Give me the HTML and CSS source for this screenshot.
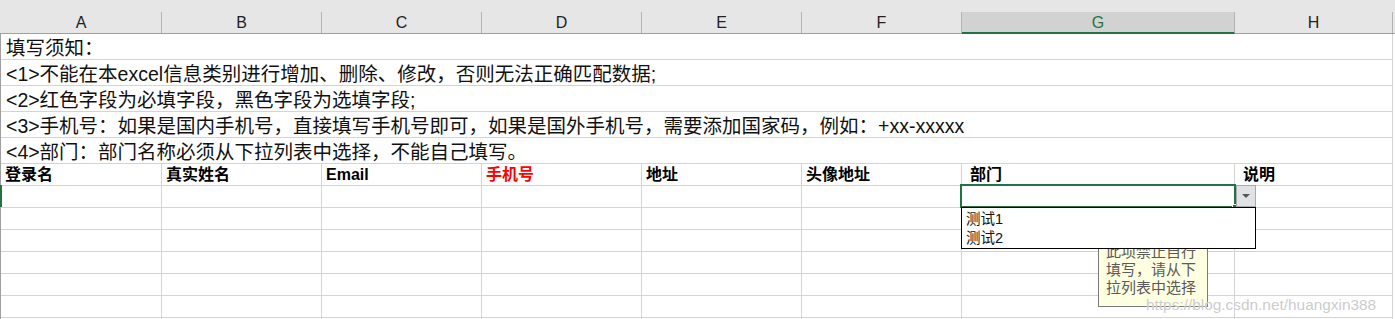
FILE: index.html
```html
<!DOCTYPE html>
<html lang="zh-CN">
<head>
    <meta charset="UTF-8">
    <meta name="viewport" content="width=device-width, initial-scale=1.0">
    <title>用户导入模板</title>
    <link rel="stylesheet" href="styles.css">
</head>
<body>
    <div class="sheet">
        <div class="col-heads">
            <div class="col-head">A</div>
            <div class="col-head">B</div>
            <div class="col-head">C</div>
            <div class="col-head">D</div>
            <div class="col-head">E</div>
            <div class="col-head">F</div>
            <div class="col-head active">G</div>
            <div class="col-head">H</div>
        </div>

        <div class="notes">
            <div class="note">填写须知：</div>
            <div class="note">&lt;1&gt;不能在本excel信息类别进行增加、删除、修改，否则无法正确匹配数据;</div>
            <div class="note">&lt;2&gt;红色字段为必填字段，黑色字段为选填字段;</div>
            <div class="note">&lt;3&gt;手机号：如果是国内手机号，直接填写手机号即可，如果是国外手机号，需要添加国家码，例如：+xx-xxxxx</div>
            <div class="note">&lt;4&gt;部门：部门名称必须从下拉列表中选择，不能自己填写。</div>
        </div>

        <div class="rows">
            <div class="row head-row">
                <div class="cell">登录名</div>
                <div class="cell">真实姓名</div>
                <div class="cell">Email</div>
                <div class="cell required">手机号</div>
                <div class="cell">地址</div>
                <div class="cell">头像地址</div>
                <div class="cell indent">部门</div>
                <div class="cell indent">说明</div>
            </div>
            <div class="row"><div class="cell"></div><div class="cell"></div><div class="cell"></div><div class="cell"></div><div class="cell"></div><div class="cell"></div><div class="cell"></div><div class="cell"></div></div>
            <div class="row"><div class="cell"></div><div class="cell"></div><div class="cell"></div><div class="cell"></div><div class="cell"></div><div class="cell"></div><div class="cell"></div><div class="cell"></div></div>
            <div class="row"><div class="cell"></div><div class="cell"></div><div class="cell"></div><div class="cell"></div><div class="cell"></div><div class="cell"></div><div class="cell"></div><div class="cell"></div></div>
            <div class="row"><div class="cell"></div><div class="cell"></div><div class="cell"></div><div class="cell"></div><div class="cell"></div><div class="cell"></div><div class="cell"></div><div class="cell"></div></div>
            <div class="row"><div class="cell"></div><div class="cell"></div><div class="cell"></div><div class="cell"></div><div class="cell"></div><div class="cell"></div><div class="cell"></div><div class="cell"></div></div>
            <div class="row"><div class="cell"></div><div class="cell"></div><div class="cell"></div><div class="cell"></div><div class="cell"></div><div class="cell"></div><div class="cell"></div><div class="cell"></div></div>
            <div class="row"><div class="cell"></div><div class="cell"></div><div class="cell"></div><div class="cell"></div><div class="cell"></div><div class="cell"></div><div class="cell"></div><div class="cell"></div></div>
        </div>

        <!-- overlays: active cell, validation dropdown, input message -->
        <div class="row-mark"></div>
        <div class="selection"><span class="fill-handle"></span></div>
        <div class="dd-button"><span class="dd-arrow"></span></div>
        <div class="input-tip">此项禁止自行<br>填写，请从下<br>拉列表中选择</div>
        <ul class="dd-list">
            <li>测试1</li>
            <li>测试2</li>
        </ul>
        <div class="watermark">https://blog.csdn.net/huangxin388</div>
    </div>
</body>
</html>
```

FILE: styles.css
```css
* {
    margin: 0;
    padding: 0;
    box-sizing: border-box;
}

body {
    font-family: 'Liberation Sans', 'Noto Sans CJK SC', sans-serif;
    background: #fff;
    color: #111;
    overflow: hidden;
}

.sheet {
    position: relative;
    width: 1395px;
    height: 319px;
    overflow: hidden;
    --cols: 161px 160px 160px 160px 160px 160px 273px 158px;
}

/* column letters */
.col-heads {
    display: grid;
    grid-template-columns: var(--cols);
    height: 34px;
    padding-top: 12px;
    padding-left: 1px;
    background: #e6e6e6;
    border-bottom: 1px solid #9f9f9f;
}

.col-head {
    height: 21px;
    line-height: 21px;
    text-align: center;
    font-size: 16px;
    color: #222;
    border-right: 1px solid #b3b3b3;
}

.col-head.active {
    height: 22px;
    background: #d2d2d2;
    color: #217346;
    border-bottom: 2px solid #217346;
}

/* merged instruction rows */
.notes {
    width: 1393px;
    border-left: 1px solid #9f9f9f;
    border-right: 1px solid #d4d4d4;
}

.note {
    height: 26px;
    padding: 3px 0 0 5px;
    font-size: 19.5px;
    line-height: 22px;
    white-space: nowrap;
    border-bottom: 1px solid #d4d4d4;
}

/* table grid */
.rows {
    border-left: 1px solid #9f9f9f;
}

.row {
    display: grid;
    grid-template-columns: var(--cols);
    height: 22px;
}

.cell {
    border-right: 1px solid #d4d4d4;
    border-bottom: 1px solid #d4d4d4;
    padding-left: 4px;
    white-space: nowrap;
}

.head-row .cell {
    font-size: 16px;
    font-weight: bold;
    line-height: 21px;
    color: #000;
}

.head-row .required {
    color: #ff0000;
}

.head-row .indent {
    padding-left: 8px;
}

/* overlays */
.row-mark {
    position: absolute;
    left: 0;
    top: 185px;
    width: 2px;
    height: 22px;
    background: #217346;
}

.selection {
    position: absolute;
    left: 960px;
    top: 184px;
    width: 276px;
    height: 24px;
    border: 2px solid #217346;
}

.fill-handle {
    position: absolute;
    right: -3px;
    bottom: -3px;
    width: 5px;
    height: 5px;
    background: #217346;
    border: 1px solid #fff;
}

.dd-button {
    position: absolute;
    left: 1236px;
    top: 185px;
    width: 20px;
    height: 22px;
    background: #e1e2e5;
    border: 1px solid #a9a9a9;
    display: flex;
    align-items: center;
    justify-content: center;
}

.dd-arrow {
    width: 0;
    height: 0;
    border-left: 4px solid transparent;
    border-right: 4px solid transparent;
    border-top: 4px solid #555;
}

.dd-list {
    position: absolute;
    left: 961px;
    top: 207px;
    width: 295px;
    height: 42px;
    list-style: none;
    background: #fff;
    border: 1px solid #000;
    padding: 2px 0 0 4px;
    font-size: 14.5px;
    line-height: 19px;
    color: #111;
    z-index: 3;
}

.input-tip {
    position: absolute;
    left: 1098px;
    top: 235px;
    width: 110px;
    height: 72px;
    padding: 7px 0 0 7px;
    background: #ffffe1;
    border: 1px solid #7a7a7a;
    font-size: 15px;
    line-height: 18px;
    color: #5a5a5a;
    z-index: 2;
}

.watermark {
    position: absolute;
    left: 1146px;
    top: 297px;
    font-size: 15.4px;
    line-height: 15px;
    color: rgba(190, 190, 190, 0.8);
    text-shadow: 0 0 1px #fff;
    z-index: 4;
}
```
